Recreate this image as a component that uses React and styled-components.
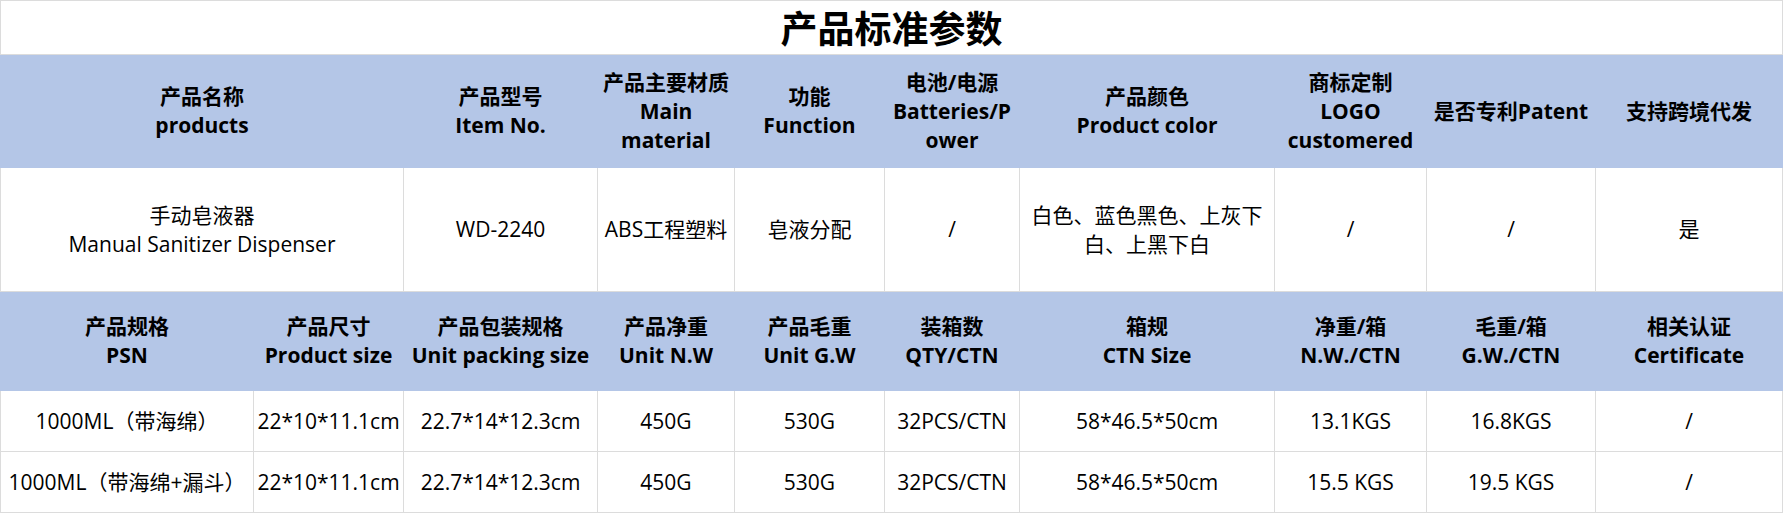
import React from 'react';
import styled, { createGlobalStyle } from 'styled-components';

const GlobalStyle = createGlobalStyle`
  body {
    margin: 0;
    background: #fff;
    font-family: "Open Sans", "Noto Sans CJK SC", sans-serif;
    color: #000;
  }
`;

const Sheet = styled.table`
  width: 1783px;
  table-layout: fixed;
  border-collapse: collapse;
  font-size: 21px;
`;

const TitleCell = styled.td`
  height: 53px;
  padding: 0;
  border: 1px solid #dcdcdc;
  text-align: center;
  font-family: "Noto Sans CJK SC", sans-serif;
  font-size: 37px;
  font-weight: 700;
  line-height: 1;
`;

const HeadRow = styled.tr`
  height: ${p => p.$h}px;
`;

const HeadCell = styled.th`
  padding: 0 2px;
  background: #b4c6e7;
  border: 1px solid #b4c6e7;
  text-align: center;
  vertical-align: middle;
  font-weight: 700;
  line-height: 29px;
  white-space: nowrap;
`;

const DataRow = styled.tr`
  height: ${p => p.$h}px;
`;

const DataCell = styled.td`
  padding: 0 2px;
  border: 1px solid #dcdcdc;
  text-align: center;
  vertical-align: middle;
  font-weight: 400;
  line-height: 29px;
  white-space: nowrap;
`;

const Line = styled.div``;

const widths = [253, 150, 194, 137, 150, 135, 255, 152, 169, 187];

const headOne = [
  { span: 2, lines: ['产品名称', 'products'] },
  { lines: ['产品型号', 'Item No.'] },
  { lines: ['产品主要材质', 'Main', 'material'] },
  { lines: ['功能', 'Function'] },
  { lines: ['电池/电源', 'Batteries/P', 'ower'] },
  { lines: ['产品颜色', 'Product color'] },
  { lines: ['商标定制', 'LOGO', 'customered'] },
  { lines: ['是否专利Patent'] },
  { lines: ['支持跨境代发'] },
];

const dataOne = [
  { span: 2, lines: ['手动皂液器', 'Manual Sanitizer Dispenser'] },
  { lines: ['WD-2240'] },
  { lines: ['ABS工程塑料'] },
  { lines: ['皂液分配'] },
  { lines: ['/'] },
  { lines: ['白色、蓝色黑色、上灰下', '白、上黑下白'] },
  { lines: ['/'] },
  { lines: ['/'] },
  { lines: ['是'] },
];

const headTwo = [
  ['产品规格', 'PSN'],
  ['产品尺寸', 'Product size'],
  ['产品包装规格', 'Unit packing size'],
  ['产品净重', 'Unit N.W'],
  ['产品毛重', 'Unit G.W'],
  ['装箱数', 'QTY/CTN'],
  ['箱规', 'CTN Size'],
  ['净重/箱', 'N.W./CTN'],
  ['毛重/箱', 'G.W./CTN'],
  ['相关认证', 'Certificate'],
];

const specs = [
  ['1000ML（带海绵）', '22*10*11.1cm', '22.7*14*12.3cm', '450G', '530G', '32PCS/CTN', '58*46.5*50cm', '13.1KGS', '16.8KGS', '/'],
  ['1000ML（带海绵+漏斗）', '22*10*11.1cm', '22.7*14*12.3cm', '450G', '530G', '32PCS/CTN', '58*46.5*50cm', '15.5 KGS', '19.5 KGS', '/'],
];

function Lines({ lines }) {
  return lines.map((t, i) => <Line key={i}>{t}</Line>);
}

export default function App() {
  return (
    <>
      <GlobalStyle />
      <Sheet>
        <colgroup>
          {widths.map((w, i) => <col key={i} style={{ width: w }} />)}
        </colgroup>
        <tbody>
          <tr>
            <TitleCell colSpan={10}>产品标准参数</TitleCell>
          </tr>
          <HeadRow $h={113}>
            {headOne.map((c, i) => (
              <HeadCell key={i} colSpan={c.span || 1}><Lines lines={c.lines} /></HeadCell>
            ))}
          </HeadRow>
          <DataRow $h={124}>
            {dataOne.map((c, i) => (
              <DataCell key={i} colSpan={c.span || 1}><Lines lines={c.lines} /></DataCell>
            ))}
          </DataRow>
          <HeadRow $h={99}>
            {headTwo.map((lines, i) => (
              <HeadCell key={i}><Lines lines={lines} /></HeadCell>
            ))}
          </HeadRow>
          {specs.map((row, r) => (
            <DataRow key={r} $h={61}>
              {row.map((v, i) => <DataCell key={i}>{v}</DataCell>)}
            </DataRow>
          ))}
        </tbody>
      </Sheet>
    </>
  );
}
